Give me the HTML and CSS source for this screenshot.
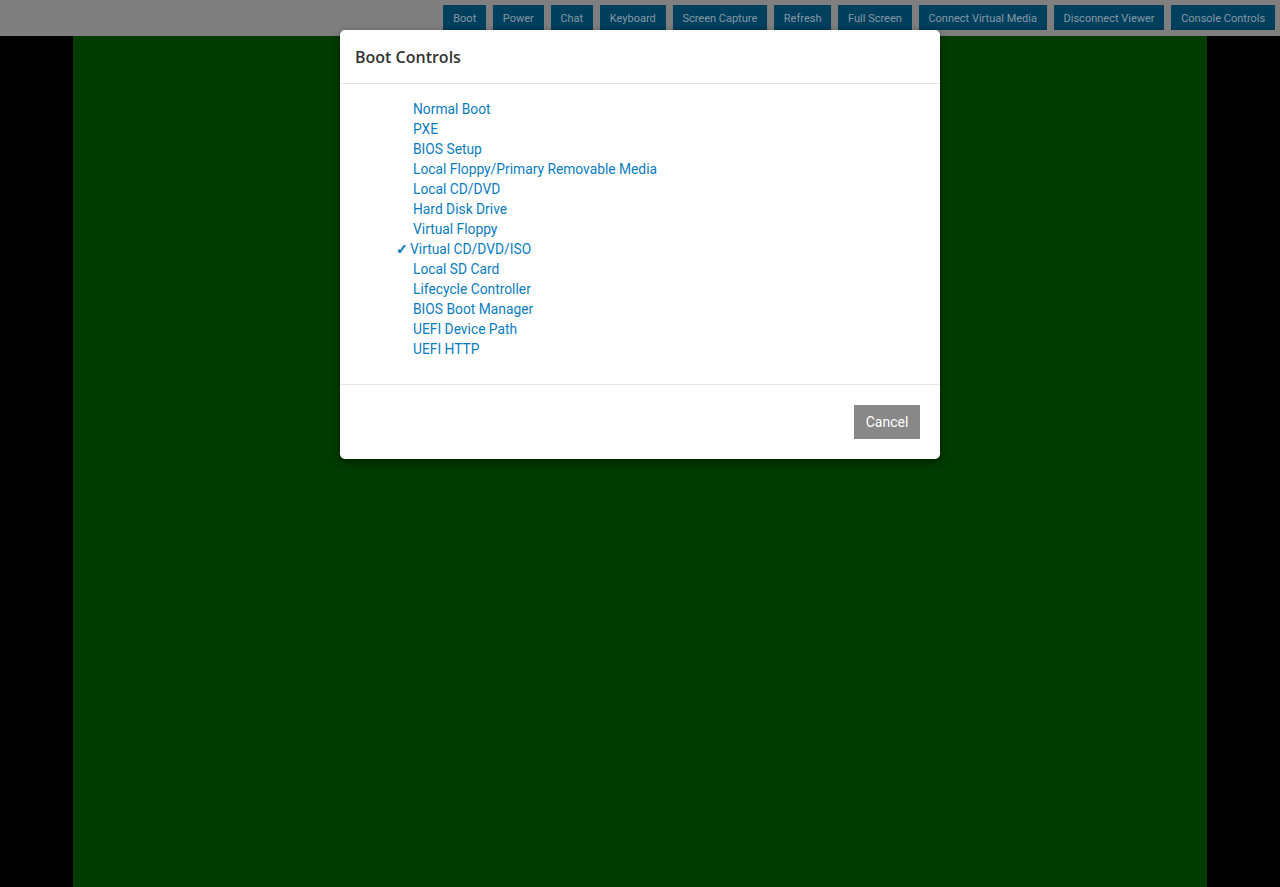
FILE: index.html
```html
<!DOCTYPE html>
<html>
<head>
<meta charset="utf-8">
<link rel="stylesheet" href="styles.css">
</head>
<body>
<div class="topbar">
  <button class="tb">Boot</button>
  <button class="tb">Power</button>
  <button class="tb">Chat</button>
  <button class="tb">Keyboard</button>
  <button class="tb">Screen Capture</button>
  <button class="tb">Refresh</button>
  <button class="tb">Full Screen</button>
  <button class="tb">Connect Virtual Media</button>
  <button class="tb">Disconnect Viewer</button>
  <button class="tb">Console Controls</button>
</div>
<div class="stage">
  <div class="screen"></div>
</div>
<div class="modal">
  <div class="modal-header">Boot Controls</div>
  <ul class="boot-list">
    <li class="item">Normal Boot</li>
    <li class="item">PXE</li>
    <li class="item">BIOS Setup</li>
    <li class="item">Local Floppy/Primary Removable Media</li>
    <li class="item">Local CD/DVD</li>
    <li class="item">Hard Disk Drive</li>
    <li class="item">Virtual Floppy</li>
    <li class="item checked"><span class="check">✓</span>Virtual CD/DVD/ISO</li>
    <li class="item">Local SD Card</li>
    <li class="item">Lifecycle Controller</li>
    <li class="item">BIOS Boot Manager</li>
    <li class="item">UEFI Device Path</li>
    <li class="item">UEFI HTTP</li>
  </ul>
  <div class="modal-footer">
    <button class="cancel">Cancel</button>
  </div>
</div>
</body>
</html>
```
FILE: styles.css
```css
* { box-sizing: border-box; }
html, body {
  margin: 0;
  padding: 0;
  height: 100%;
  overflow: hidden;
  background: #000;
  font-family: Roboto, "Liberation Sans", sans-serif;
}
.topbar {
  height: 36px;
  background: #7f7f7f;
  display: flex;
  justify-content: flex-end;
  align-items: flex-start;
  gap: 7px;
  padding: 5px 5px 0 0;
}
.tb {
  height: 25px;
  border: none;
  margin: 0;
  padding: 2px 9.8px 0;
  background: linear-gradient(#00405e 0, #00405e 80%, #003a55 100%);
  color: #8697a3;
  font-family: Roboto, "Liberation Sans", sans-serif;
  font-size: 11px;
  line-height: 23px;
}
.stage {
  height: calc(100% - 36px);
  display: flex;
  justify-content: center;
}
.screen {
  width: 1134px;
  height: 100%;
  background: #003c00;
}
.modal {
  position: absolute;
  left: 340px;
  top: 30px;
  width: 600px;
  background: #fff;
  border-radius: 5px;
  box-shadow: 0 3px 9px rgba(0,0,0,0.5);
}
.modal-header {
  height: 54px;
  padding: 16px 15px 0;
  font-family: "Open Sans", "Liberation Sans", sans-serif;
  font-weight: 600;
  font-size: 16px;
  color: #333;
  border-bottom: 1px solid #e5e5e5;
}
.boot-list {
  list-style: none;
  margin: 0;
  padding: 15px 0 25px 73px;
  border-bottom: 1px solid #e5e5e5;
}
.item {
  font-size: 13.8px;
  line-height: 20px;
  height: 20px;
  color: #0a7dc2;
}
.checked {
  margin-left: -17px;
}
.check {
  display: inline-block;
  width: 14px;
  font-weight: bold;
  font-family: "DejaVu Sans", sans-serif;
  font-size: 14px;
  -webkit-text-stroke: 0.7px #0a7dc2;
}
.modal-footer {
  height: 74px;
  display: flex;
  justify-content: flex-end;
  padding: 20px 20px 0;
}
.cancel {
  width: 66px;
  height: 34px;
  border: none;
  background: #888;
  color: #fff;
  font-family: Roboto, "Liberation Sans", sans-serif;
  font-size: 14px;
}
```
